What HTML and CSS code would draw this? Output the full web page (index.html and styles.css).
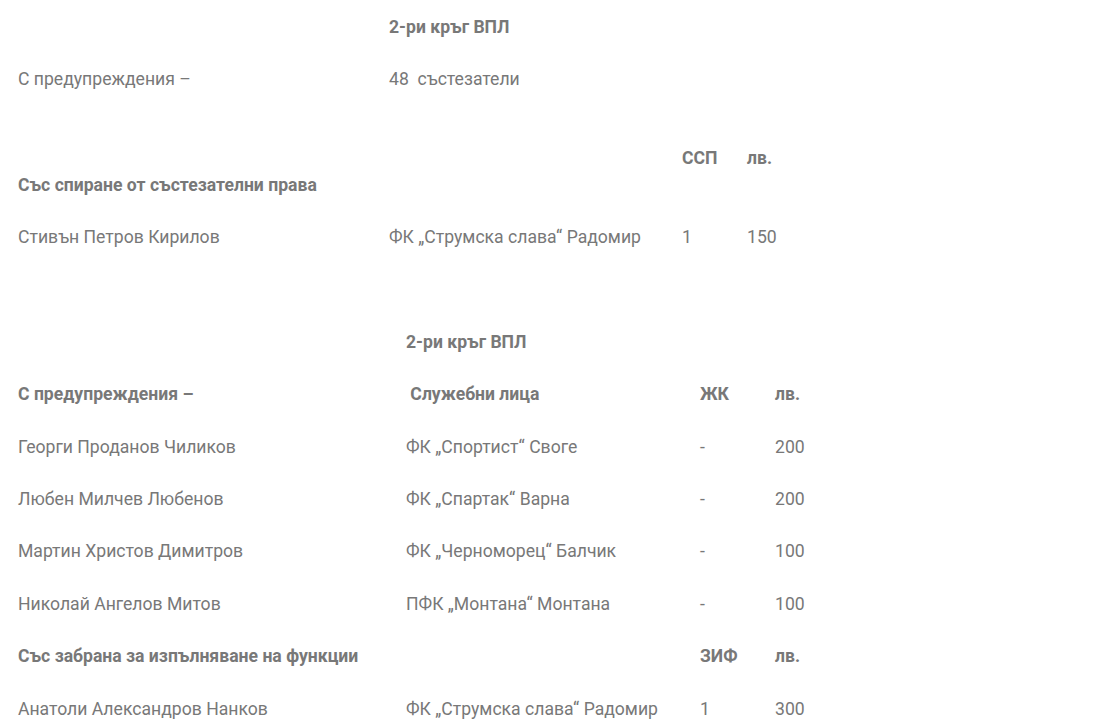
FILE: index.html
```html
<!DOCTYPE html>
<html lang="bg">
<head>
<meta charset="utf-8">
<title>Наказания</title>
<link rel="stylesheet" href="styles.css">
</head>
<body>
<div class="page">
  <table class="grid grid-a">
    <colgroup><col class="a1"><col class="a2"><col class="a3"><col class="a4"></colgroup>
    <tr><td></td><td><strong>2-ри кръг ВПЛ</strong></td><td></td><td></td></tr>
    <tr><td>С предупреждения –</td><td>48&nbsp; състезатели</td><td></td><td></td></tr>
    <tr><td><br><br><strong>Със спиране от състезателни права</strong></td><td></td><td><br><strong>ССП</strong></td><td><br><strong>лв.</strong></td></tr>
    <tr><td>Стивън Петров Кирилов</td><td>ФК „Струмска слава“ Радомир</td><td>1</td><td>150</td></tr>
  </table>

  <table class="grid grid-b">
    <colgroup><col class="b1"><col class="b2"><col class="b3"><col class="b4"></colgroup>
    <tr><td></td><td><strong>2-ри кръг ВПЛ</strong></td><td></td><td></td></tr>
    <tr><td><strong>С предупреждения –</strong></td><td><strong>&nbsp;Служебни лица</strong></td><td><strong>ЖК</strong></td><td><strong>лв.</strong></td></tr>
    <tr><td>Георги Проданов Чиликов</td><td>ФК „Спортист“ Своге</td><td>-</td><td>200</td></tr>
    <tr><td>Любен Милчев Любенов</td><td>ФК „Спартак“ Варна</td><td>-</td><td>200</td></tr>
    <tr><td>Мартин Христов Димитров</td><td>ФК „Черноморец“ Балчик</td><td>-</td><td>100</td></tr>
    <tr><td>Николай Ангелов Митов</td><td>ПФК „Монтана“ Монтана</td><td>-</td><td>100</td></tr>
    <tr><td><strong>Със забрана за изпълняване на функции</strong></td><td></td><td><strong>ЗИФ</strong></td><td><strong>лв.</strong></td></tr>
    <tr><td>Анатоли Александров Нанков</td><td>ФК „Струмска слава“ Радомир</td><td>1</td><td>300</td></tr>
  </table>
</div>
</body>
</html>
```

FILE: styles.css
```css
html, body {
  margin: 0;
  padding: 0;
  background: #ffffff;
}

body {
  font-family: Roboto, "Liberation Sans", sans-serif;
  font-size: 17.6px;
  line-height: 26.4px;
  color: #787878;
}

.page {
  padding: 1px 0 0 18px;
}

.grid {
  border-collapse: collapse;
  border-spacing: 0;
  table-layout: fixed;
}

.grid td {
  padding: 13px 0;
  vertical-align: top;
  white-space: nowrap;
}

.grid strong {
  font-weight: 700;
}

.grid-b {
  margin-top: 52.4px;
}

.a1 { width: 371px; }
.a2 { width: 293px; }
.a3 { width: 65px; }
.a4 { width: 100px; }

.b1 { width: 388px; }
.b2 { width: 294px; }
.b3 { width: 75px; }
.b4 { width: 100px; }
```
